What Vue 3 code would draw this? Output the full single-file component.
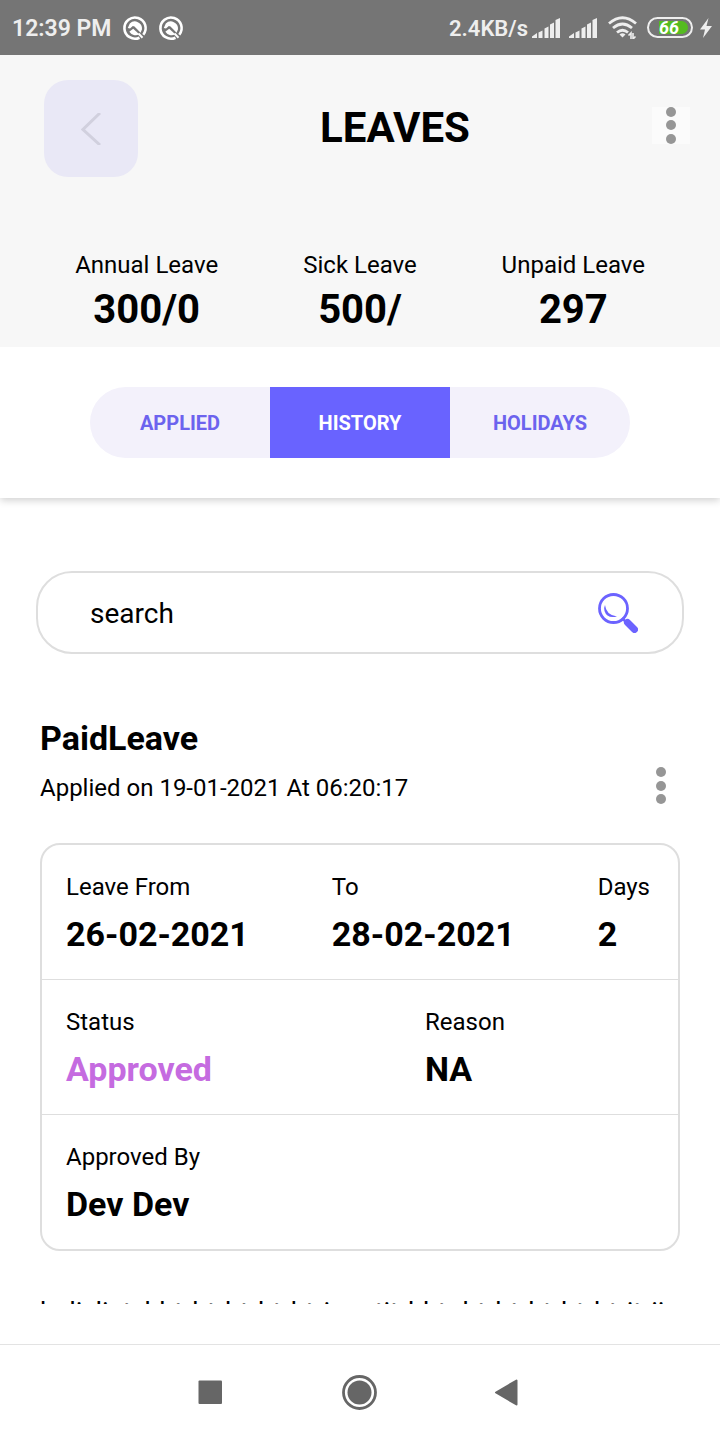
<script setup>
import { ref } from 'vue'

const balances = [
  { label: 'Annual Leave', value: '300/0' },
  { label: 'Sick Leave', value: '500/' },
  { label: 'Unpaid Leave', value: '297' },
]
const tabs = ['APPLIED', 'HISTORY', 'HOLIDAYS']
const activeTab = ref('HISTORY')
const query = ref('')
const notifications = [1, 2]
const networks = [1, 2]
</script>

<template>
  <div class="page">
    <div class="status">
      <div class="status-side">
        <span class="clock">12:39 PM</span>
        <svg v-for="n in notifications" :key="n" class="q-icon" viewBox="0 0 24 24" aria-hidden="true">
          <path d="M16.5 21.7 A10.6 10.6 0 1 1 20.3 18.7" fill="none" stroke="#fff" stroke-width="2.6" />
          <path d="M6.8 7.5 A7.2 7.2 0 0 1 19 13.2 L17.6 16.8 L11.5 10.4 L9.8 10 L7 12.4 L4.8 12 Z" fill="#fff" />
          <path d="M6.3 15.8 L10.2 12.7 L16.2 18.3 A7.5 7.5 0 0 1 6.3 15.8 Z" fill="#fff" />
          <path d="M15.5 17.5 L19.5 21.7" stroke="#fff" stroke-width="2" />
        </svg>
      </div>
      <div class="status-side right">
        <span class="speed">2.4KB/s</span>
        <svg v-for="n in networks" :key="n" class="signal" viewBox="0 0 28 20" aria-hidden="true">
          <path d="M0 20 V18.5 L5 15 V20 Z M6.5 14.5 L10.5 12.5 V20 H6.5 Z M12.5 10.500 L16.500 8.500 V20 H12.5 Z M18 6.500 L22 4.500 V20 H18 Z M23.500 2 L28 0 V20 H23.500 Z" fill="#eee" />
        </svg>
        <svg class="wifi" viewBox="0 0 29 23" aria-hidden="true">
          <g fill="none" stroke="#eee" stroke-width="2.8">
            <path d="M1 7.5 Q14.500 -4 28 7.5" />
            <path d="M5 12 Q14.500 4 24 12" />
            <path d="M9 16.500 Q14.500 12 20 16.500" />
          </g>
          <path d="M11.500 18.500 Q14.500 16 17.500 18.500 L14.500 21.500 Z" fill="#eee" />
          <path d="M20.500 19.500 L23 17 V23 M25 17 V23 L27.500 20.500" fill="none" stroke="#eee" stroke-width="1.600" />
        </svg>
        <div class="battery"><span class="level">66</span></div>
        <svg class="bolt" viewBox="0 0 14 20" aria-hidden="true">
          <path d="M9.500 0 L1 11.500 H6 L4 20 L13 8 H7.500 Z" fill="#eee" />
        </svg>
      </div>
    </div>

    <header class="top">
      <div class="title-row">
        <button class="back" type="button" aria-label="Back">
          <svg viewBox="0 0 20 32" width="20" height="32" aria-hidden="true">
            <path d="M19 0 L2 16.500 L19 32" fill="none" stroke="#d1d0de" stroke-width="3" />
          </svg>
        </button>
        <h1>LEAVES</h1>
        <button class="dots boxed" type="button" aria-label="More options"><i></i><i></i><i></i></button>
      </div>
      <div class="balances">
        <div v-for="b in balances" :key="b.label" class="balance">
          <span>{{ b.label }}</span>
          <strong>{{ b.value }}</strong>
        </div>
      </div>
    </header>

    <nav class="tabs">
      <div class="pill">
        <button
          v-for="t in tabs"
          :key="t"
          type="button"
          :class="{ active: t === activeTab }"
          @click="activeTab = t"
        >{{ t }}</button>
      </div>
    </nav>

    <main class="content">
      <label class="search">
        <input v-model="query" type="text" placeholder="search" aria-label="search" />
        <svg viewBox="0 0 40 40" width="40" height="40" aria-hidden="true">
          <circle cx="15.500" cy="15.500" r="14" fill="none" stroke="#6c63ff" stroke-width="2.800" />
          <path d="M7 12 Q8 22 19 23.500 Q9 26 6.500 18 Q5.500 15 7 12 Z" fill="#6c63ff" />
          <path d="M24 25 L28 29" stroke="#6c63ff" stroke-width="2.500" />
          <path d="M29.500 29.500 L36.500 36.500" stroke="#6c63ff" stroke-width="7" stroke-linecap="round" />
        </svg>
      </label>

      <section class="entry">
        <div class="entry-head">
          <div>
            <h2>PaidLeave</h2>
            <p>Applied on 19-01-2021 At 06:20:17</p>
          </div>
          <button class="dots" type="button" aria-label="Leave options"><i></i><i></i><i></i></button>
        </div>
        <div class="card">
          <div class="line dates">
            <div class="field"><span>Leave From</span><strong>26-02-2021</strong></div>
            <div class="field"><span>To</span><strong>28-02-2021</strong></div>
            <div class="field"><span>Days</span><strong>2</strong></div>
          </div>
          <div class="line halves">
            <div class="field"><span>Status</span><strong class="approved">Approved</strong></div>
            <div class="field"><span>Reason</span><strong>NA</strong></div>
          </div>
          <div class="line">
            <div class="field"><span>Approved By</span><strong>Dev Dev</strong></div>
          </div>
        </div>
      </section>

      <p class="next">helivlietyhhtrhtrhtrhtrhtrianntitrhhtr htrhtrhtrhtrhtritrii</p>
    </main>

    <footer class="system">
      <button type="button" aria-label="Recent apps">
        <svg viewBox="0 0 36 36" width="36" height="36"><rect x="5.500" y="5.500" width="23.500" height="23.500" rx="1" fill="#666" /></svg>
      </button>
      <button type="button" aria-label="Home">
        <svg viewBox="0 0 36 36" width="36" height="36"><circle cx="17.500" cy="17.500" r="16" fill="none" stroke="#666" stroke-width="2.800" /><circle cx="17.500" cy="17.500" r="12" fill="#666" /></svg>
      </button>
      <button type="button" aria-label="System back">
        <svg viewBox="0 0 36 36" width="36" height="36"><path d="M5 17.500 L25.500 5.500 V29.500 Z" fill="#666" stroke="#666" stroke-width="2" stroke-linejoin="round" /></svg>
      </button>
    </footer>
  </div>
</template>

<style>
body { background: #fff; }
</style>

<style scoped>
* { box-sizing: border-box; }
.page {
  height: 100vh;
  display: flex;
  flex-direction: column;
  font-family: Roboto, "Liberation Sans", sans-serif;
  color: #000;
  background: #fff;
}
h1, h2, p { margin: 0; }
button { font-family: inherit; border: 0; padding: 0; background: none; cursor: pointer; }
svg { flex: none; display: block; }

.status {
  flex: none;
  height: 55px;
  padding: 0 7px 0 12px;
  display: flex;
  justify-content: space-between;
  align-items: center;
  background: #757575;
  color: #eee;
}
.status-side { display: flex; align-items: center; gap: 12px; }
.clock, .speed { font-size: 23px; font-weight: 600; line-height: 28px; padding-top: 2px; }
.speed { font-size: 22px; }
.q-icon { width: 24px; height: 24px; overflow: visible; }
.right { gap: 0; }
.signal { width: 28px; height: 20px; margin: 0 5px 0 4px; }
.wifi { width: 29px; height: 23px; margin: 0 10px 0 6px; }
.battery {
  width: 46px;
  height: 21px;
  padding: 2px 3px;
  border: 2px solid #eee;
  border-radius: 11px;
  display: flex;
}
.level {
  flex: 1;
  border-radius: 0 8px 8px 0;
  background: linear-gradient(90deg, transparent 20%, #55bb20 20%);
  color: #fff;
  font-size: 18px;
  font-weight: 700;
  font-style: italic;
  line-height: 14px;
  padding-left: 7px;
}
.bolt { width: 14px; height: 20px; margin-left: 6px; }

.top { flex: none; position: relative; z-index: 1; background: #f7f7f7; padding: 25px 30px 10px 44px; }
.title-row { display: flex; align-items: center; justify-content: space-between; }
.back {
  width: 94px;
  height: 97px;
  border-radius: 24px;
  background: #e9e8f6;
  display: flex;
  align-items: center;
  justify-content: center;
}
h1 { font-size: 42px; line-height: 48px; font-weight: 700; margin-bottom: 2px; }
.dots {
  width: 38px;
  height: 37px;
  display: flex;
  flex-direction: column;
  align-items: center;
  justify-content: space-between;
}
.dots i { width: 10px; height: 10px; border-radius: 50%; background: #969696; }
.boxed { background: #fbfbfb; margin-bottom: 7px; }
.balances { display: grid; grid-template-columns: repeat(3, 1fr); margin: 73px 10px 0 -4px; }
.balance { display: flex; flex-direction: column; align-items: center; }
.balance span { font-size: 24px; line-height: 30px; }
.balance strong { font-size: 40px; line-height: 52px; margin: 4px 0 1px; }

.tabs {
  flex: none;
  padding: 40px 90px;
  background: #fff;
  box-shadow: 0 2px 8px rgba(0, 0, 0, 0.2);
}
.pill { display: flex; border-radius: 36px; overflow: hidden; background: #f3f1fb; }
.pill button { flex: 1; height: 71px; font-size: 20px; font-weight: 700; color: #6c63ee; }
.pill .active { background: #6963ff; color: #fff; }

.content { flex: 1; min-height: 0; overflow: hidden; margin-bottom: 40px; padding-top: 73px; }
.search {
  margin: 0 36px;
  height: 83px;
  padding: 0 44px 0 52px;
  border: 2px solid #dedede;
  border-radius: 36px;
  display: flex;
  align-items: center;
}
.search input {
  flex: 1;
  min-width: 0;
  border: 0;
  outline: 0;
  padding: 2px 0 0;
  background: none;
  color: #000;
  font: 28px/36px Roboto, "Liberation Sans", sans-serif;
}
.search input::placeholder { color: #000; opacity: 1; }

.entry { padding: 64px 40px 0; }
.entry-head { display: flex; justify-content: space-between; align-items: flex-end; }
h2 { font-size: 34px; line-height: 40px; font-weight: 700; }
.entry-head p { font-size: 24px; line-height: 30px; margin-top: 15px; }
.entry-head .dots { margin-bottom: -1px; }
.card { margin-top: 40px; border: 2px solid #dedede; border-radius: 20px; }
.line { padding: 27px 24px 25px; display: flex; }
.line + .line { border-top: 1px solid #dedede; }
.field { display: flex; flex-direction: column; }
.field span { font-size: 24px; line-height: 30px; }
.field strong { font-size: 34px; line-height: 40px; margin-top: 12px; }
.dates { justify-content: space-between; padding-right: 28px; }
.halves { display: grid; grid-template-columns: 359px 1fr; }
.approved { color: #c56be0; }
.next { margin: 46px 40px 0; font-size: 27px; line-height: 32px; white-space: nowrap; }

.system {
  flex: none;
  height: 96px;
  border-top: 1px solid #e3e3e3;
  display: flex;
  justify-content: center;
  align-items: center;
  gap: 113px;
}
</style>
